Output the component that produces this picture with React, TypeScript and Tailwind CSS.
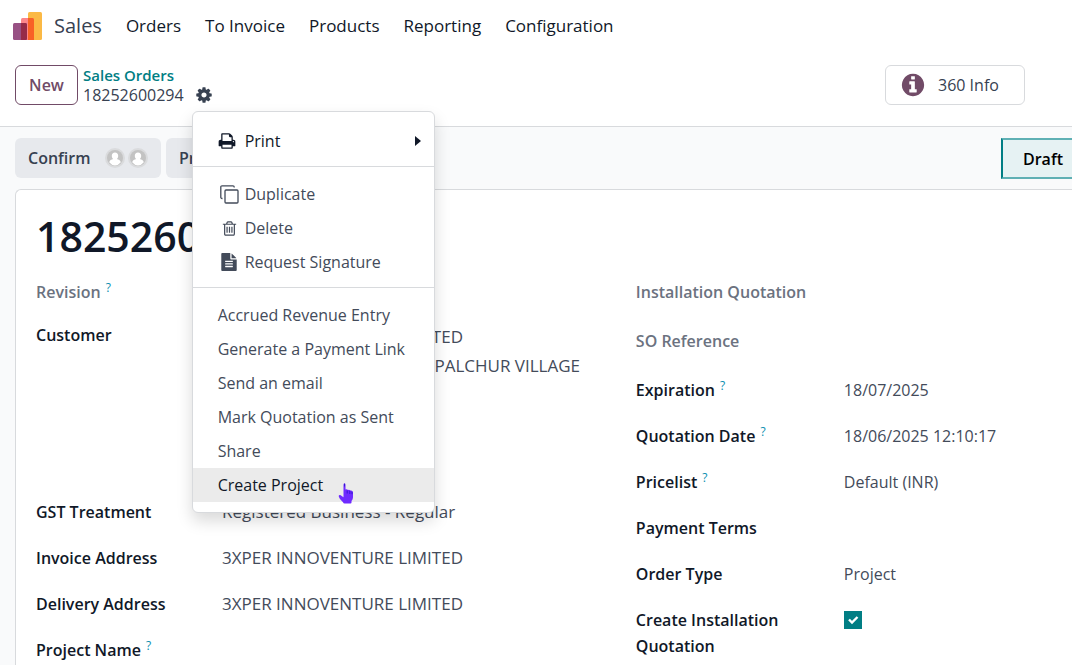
import type { ReactNode } from 'react';

type IconProps = { d: string; className?: string };

const Icon = ({ d, className }: IconProps) => (
  <svg viewBox="0 0 1792 1792" fill="currentColor" className={className} aria-hidden="true">
    <path d={d} />
  </svg>
);

const icons = {
  info: 'M1152 1376v-160q0-14-9-23t-23-9h-96v-512q0-14-9-23t-23-9h-320q-14 0-23 9t-9 23v160q0 14 9 23t23 9h96v320h-96q-14 0-23 9t-9 23v160q0 14 9 23t23 9h448q14 0 23-9t9-23zm-128-896v-160q0-14-9-23t-23-9h-192q-14 0-23 9t-9 23v160q0 14 9 23t23 9h192q14 0 23-9t9-23zm640 416q0 209-103 385.5t-279.5 279.5-385.5 103-385.5-103-279.5-279.5-103-385.5 103-385.5 279.5-279.5 385.5-103 385.5 103 279.5 279.5 103 385.5z',
  cog: 'M1152 896q0-106-75-181t-181-75-181 75-75 181 75 181 181 75 181-75 75-181zm512-109v222q0 12-8 23t-20 13l-185 28q-19 54-39 91 35 50 107 138 10 12 10 25t-9 23q-27 37-99 108t-94 71q-12 0-26-9l-138-108q-44 23-91 38-16 136-29 186-7 28-36 28h-222q-14 0-24.5-8.5t-11.5-21.5l-28-184q-49-16-90-37l-141 107q-10 9-25 9-14 0-25-11-126-114-165-168-7-10-7-23 0-12 8-23 15-21 51-66.5t54-70.5q-27-50-41-99l-183-27q-13-2-21-12.5t-8-23.5v-222q0-12 8-23t19-13l186-28q14-46 39-92-40-57-107-138-10-12-10-24 0-10 9-23 26-36 98.5-107.5t94.5-71.5q13 0 26 10l138 107q44-23 91-38 16-136 29-186 7-28 36-28h222q14 0 24.5 8.5t11.5 21.5l28 184q49 16 90 37l142-107q9-9 24-9 13 0 25 10 129 119 165 170 7 8 7 22 0 12-8 23-15 21-51 66.5t-54 70.5q26 50 41 98l183 28q13 2 21 12.5t8 23.5z',
  print: 'M448 1536h896v-256h-896v256zm0-640h896v-384h-160q-40 0-68-28t-28-68v-160h-640v640zm1152 64q0-26-19-45t-45-19-45 19-19 45 19 45 45 19 45-19 19-45zm128 0v416q0 13-9.5 22.5t-22.5 9.5h-224v160q0 40-28 68t-68 28h-960q-40 0-68-28t-28-68v-160h-224q-13 0-22.5-9.5t-9.5-22.5v-416q0-79 56.5-135.5t135.5-56.5h64v-544q0-40 28-68t68-28h672q40 0 88 20t76 48l152 152q28 28 48 76t20 88v256h64q79 0 135.5 56.5t56.5 135.5z',
  trash: 'M704 736v576q0 14-9 23t-23 9h-64q-14 0-23-9t-9-23v-576q0-14 9-23t23-9h64q14 0 23 9t9 23zm256 0v576q0 14-9 23t-23 9h-64q-14 0-23-9t-9-23v-576q0-14 9-23t23-9h64q14 0 23 9t9 23zm256 0v576q0 14-9 23t-23 9h-64q-14 0-23-9t-9-23v-576q0-14 9-23t23-9h64q14 0 23 9t9 23zm128 724v-948h-896v948q0 22 7 40.5t14.5 27 10.5 8.5h832q3 0 10.5-8.5t14.5-27 7-40.5zm-672-1076h448l-48-117q-7-9-17-11h-317q-10 2-17 11zm928 32v64q0 14-9 23t-23 9h-96v948q0 83-47 143.5t-113 60.5h-832q-66 0-113-58.5t-47-141.5v-952h-96q-14 0-23-9t-9-23v-64q0-14 9-23t23-9h309l70-167q15-37 54-63t79-26h320q40 0 79 26t54 63l70 167h309q14 0 23 9t9 23z',
  file: 'M1596 476q14 14 28 36h-472v-472q22 14 36 28zm-476 164h544v1056q0 40-28 68t-68 28h-1344q-40 0-68-28t-28-68v-1600q0-40 28-68t68-28h800v544q0 40 28 68t68 28zm160 736v-64q0-14-9-23t-23-9h-704q-14 0-23 9t-9 23v64q0 14 9 23t23 9h704q14 0 23-9t9-23zm0-256v-64q0-14-9-23t-23-9h-704q-14 0-23 9t-9 23v64q0 14 9 23t23 9h704q14 0 23-9t9-23zm0-256v-64q0-14-9-23t-23-9h-704q-14 0-23 9t-9 23v64q0 14 9 23t23 9h704q14 0 23-9t9-23z',
};

const SalesLogo = () => (
  <svg viewBox="0 0 29 29" className="w-[29px] h-[29px]" aria-hidden="true">
    <rect x="15" y="0" width="14" height="28" rx="1.5" fill="#FBB945" />
    <rect x="8" y="6" width="13" height="22" rx="1.5" fill="#FC868B" />
    <rect x="0" y="11" width="14" height="17" rx="1.5" fill="#985184" />
    <path d="M15 6h4.500q1.500 0 1.500 1.500V28h-6z" fill="#F86126" />
    <path d="M8 11h4.500q1.500 0 1.500 1.500v14q0 1.500-1.500 1.500H8z" fill="#962B48" />
  </svg>
);

const DuplicateIcon = () => (
  <svg viewBox="0 0 19 19" fill="none" stroke="currentColor" strokeWidth="1.3" className="w-[19px] h-[19px]" aria-hidden="true">
    <rect x="5" y="5" width="13" height="13" rx="1" />
    <path d="M2.500 13.500H2A1.200 1.200 0 0 1 .8 12.300V2A1.200 1.200 0 0 1 2 .8h11A1.200 1.200 0 0 1 14.200 2v.5" />
  </svg>
);

const Avatar = () => (
  <svg viewBox="0 0 20 20" className="w-5 h-5" aria-hidden="true">
    <circle cx="10" cy="10" r="10" fill="#dadbdd" />
    <circle cx="10" cy="10" r="8" fill="#c3c3c3" />
    <path d="M10 4.500c2 0 3.200 1.300 3.200 3.200 0 1.400-.6 2.600-1.400 3.300 1.800.5 3.600 1.300 4 3.300A8 8 0 0 1 10 17.500a8 8 0 0 1-5.800-3.200c.4-2 2.200-2.800 4-3.300-.8-.7-1.400-1.900-1.400-3.300 0-1.900 1.200-3.200 3.200-3.200z" fill="#fff" />
  </svg>
);

const HandCursor = () => (
  <svg viewBox="0 0 17 21" className="absolute left-[145px] top-[15px] w-[17px] h-[21px]" aria-hidden="true">
    <path
      d="M5.500 1.700Q5.500.5 6.500.5t1 1.200v4.800q1.500-.5 2.500.4 1.500-.4 2.500.6 1.500-.2 2 .8.500.5.500 1.500v4.500q0 2-1.500 3.700v1.500q0 1-1 1H6.500q-1 0-1.500-1.200-3.500-3-4.200-5.500-.3-1.500.7-1.800 1-.2 2.500 1.200l1.500 1z"
      fill="#6f2bff"
    />
    <path d="M9.200 7.500v3M11.800 8v3M14 8.700v2.500M6.500.5v3" stroke="#2a10c9" strokeWidth=".8" />
  </svg>
);

type MenuItemProps = { icon?: ReactNode; children: ReactNode; active?: boolean; submenu?: boolean; dark?: boolean };

const MenuItem = ({ icon, children, active, submenu, dark }: MenuItemProps) => (
  <button
    type="button"
    role="menuitem"
    className={`relative flex w-full h-[34px] items-center px-[25px] text-left ${active ? 'bg-[#ebebeb] text-gray-900' : dark ? 'text-gray-900' : 'text-[#434b5a]'}`}
  >
    {icon && <span className="flex w-[27px] shrink-0 items-center">{icon}</span>}
    <span className="grow whitespace-nowrap">{children}</span>
    {submenu && (
      <svg viewBox="0 0 6 10" className="-mr-3 h-[10px] w-[6px]" fill="currentColor" aria-hidden="true">
        <path d="M0 0l6 5-6 5z" />
      </svg>
    )}
    {active && <HandCursor />}
  </button>
);

const Separator = () => <hr className="mt-2 mb-[10px] border-t border-[#d8dadd]" />;

const ActionMenu = () => (
  <div
    role="menu"
    className="absolute left-[-3px] top-[25px] z-10 w-[243px] rounded-md border border-[#d8dadd] bg-white pt-3 pb-[10px] text-base shadow-[0_8px_16px_rgba(0,0,0,0.15)]"
  >
    <MenuItem dark submenu icon={<Icon d={icons.print} className="h-[18px] w-[18px]" />}>Print</MenuItem>
    <Separator />
    <MenuItem icon={<span className="ml-[2px]"><DuplicateIcon /></span>}>Duplicate</MenuItem>
    <MenuItem icon={<Icon d={icons.trash} className="ml-[3px] h-[17px] w-[17px]" />}>Delete</MenuItem>
    <MenuItem icon={<Icon d={icons.file} className="ml-[2px] h-[18px] w-[18px]" />}>Request Signature</MenuItem>
    <Separator />
    <MenuItem>Accrued Revenue Entry</MenuItem>
    <MenuItem>Generate a Payment Link</MenuItem>
    <MenuItem>Send an email</MenuItem>
    <MenuItem>Mark Quotation as Sent</MenuItem>
    <MenuItem>Share</MenuItem>
    <MenuItem active>Create Project</MenuItem>
  </div>
);

const Help = () => <span className="ml-[5px] align-super text-xs leading-none font-medium text-[#0b8fb0]">?</span>;

type FieldProps = { label: string; help?: boolean; muted?: boolean; className?: string; children?: ReactNode };

const LeftField = ({ label, help, muted, className = '', children }: FieldProps) => (
  <div className={`flex ${className}`}>
    <dt className={`h-[26px] w-[186px] shrink-0 font-semibold ${muted ? 'text-[#6b7280]' : 'text-gray-900'}`}>
      {label}
      {help && <Help />}
    </dt>
    <dd className="grow text-[17px] whitespace-nowrap text-[#434b5a]">{children}</dd>
  </div>
);

const RightField = ({ label, help, muted, className = '', children }: FieldProps) => (
  <div className={`flex ${className}`}>
    <dt className={`h-[26px] w-[208px] shrink-0 font-semibold ${muted ? 'text-[#6b7280]' : 'text-gray-900'}`}>
      {label}
      {help && <Help />}
    </dt>
    <dd className="grow whitespace-nowrap text-[#434b5a]">{children}</dd>
  </div>
);

const App = () => {
  return (
    <div className="flex min-h-screen flex-col overflow-hidden bg-white font-['Open_Sans','Noto_Sans',sans-serif] text-base leading-[26px] text-[#374151]">
      {/* Navbar */}
      <header className="flex h-[52px] items-center pl-[13px]">
        <SalesLogo />
        <a href="#sales" className="ml-3 text-xl text-[#374151]">Sales</a>
        <nav className="ml-6 flex gap-6 text-[17px] whitespace-nowrap text-gray-900">
          <a href="#orders">Orders</a>
          <a href="#to-invoice">To Invoice</a>
          <a href="#products">Products</a>
          <a href="#reporting">Reporting</a>
          <a href="#configuration">Configuration</a>
        </nav>
      </header>

      {/* Control panel */}
      <div className="flex h-[75px] items-start border-b border-[#d8dadd] pt-[13px] pr-[47px] pl-[15px]">
        <button type="button" className="h-10 w-[63px] rounded-md border border-[#714b67] font-semibold text-[#714b67]">
          New
        </button>
        <div className="ml-[5px] leading-5">
          <a href="#sales-orders" className="block text-[15px] font-semibold text-[#017e84]">Sales Orders</a>
          <div className="flex items-center">
            <span>18252600294</span>
            <div className="relative ml-[11px] flex">
              <button type="button" aria-label="Actions" aria-haspopup="menu" className="text-[#374151]">
                <Icon d={icons.cog} className="h-[18px] w-[18px]" />
              </button>
              <ActionMenu />
            </div>
          </div>
        </div>
        <button type="button" className="ml-auto flex h-10 w-[140px] items-center rounded-md border border-[#d8dadd] pl-[14px]">
          <Icon d={icons.info} className="h-[26px] w-[26px] text-[#714b67]" />
          <span className="ml-3">360 Info</span>
        </button>
      </div>

      <main className="flex grow flex-col bg-[#f9fafb] pl-[15px]">
        {/* Status bar */}
        <div className="flex items-start gap-[5px] pt-[11px] pb-[10px]">
          <button type="button" className="flex h-10 w-[146px] items-center rounded-md bg-[#e7e9ed] pl-[13px] font-semibold text-[#374151]">
            Confirm
            <span className="ml-[14px] flex gap-[3px]">
              <Avatar />
              <Avatar />
            </span>
          </button>
          <button type="button" className="h-10 rounded-md bg-[#e7e9ed] px-[13px] font-semibold text-[#374151]">
            Pr
          </button>
          <button type="button" className="ml-auto h-[41px] border-2 border-r-0 border-y-[#5fb0b4] border-l-[#017e84] bg-[#e6f2f3] pr-[9px] pl-5 font-semibold text-black">
            Draft
          </button>
        </div>

        {/* Form sheet */}
        <section className="grow rounded-tl-md border-t border-l border-[#d8dadd] bg-white pt-[22px] pl-5">
          <h1 className="mb-[19px] text-[41px] leading-[48px] font-semibold text-gray-900">18252600294</h1>
          <div className="grid grid-cols-[579fr_421fr]">
            <dl className="flex flex-col gap-5">
              <LeftField label="Revision" help muted className="-mb-[3px]" />
              <LeftField label="Customer" className="min-h-[157px]">
                <p className="leading-[29px]">3XPER INNOVENTURE LIMITED</p>
                <p className="w-[358px] text-right leading-[29px]">PALCHUR VILLAGE</p>
              </LeftField>
              <LeftField label="GST Treatment">Registered Business - Regular</LeftField>
              <LeftField label="Invoice Address">3XPER INNOVENTURE LIMITED</LeftField>
              <LeftField label="Delivery Address">3XPER INNOVENTURE LIMITED</LeftField>
              <LeftField label="Project Name" help />
            </dl>
            <dl className="flex flex-col gap-5">
              <RightField label="Installation Quotation" muted className="mb-[3px] whitespace-nowrap" />
              <RightField label="SO Reference" muted className="mb-[3px]" />
              <RightField label="Expiration" help>18/07/2025</RightField>
              <RightField label="Quotation Date" help>18/06/2025 12:10:17</RightField>
              <RightField label="Pricelist" help>Default (INR)</RightField>
              <RightField label="Payment Terms" />
              <RightField label="Order Type">Project</RightField>
              <div className="flex">
                <dt className="w-[208px] shrink-0 pr-10 font-semibold text-gray-900">
                  <label htmlFor="create-installation">Create Installation Quotation</label>
                </dt>
                <dd className="grid h-[26px] w-[18px] items-center">
                  <input
                    id="create-installation"
                    type="checkbox"
                    defaultChecked
                    className="col-start-1 row-start-1 h-[18px] w-[18px] appearance-none bg-[#017e84]"
                  />
                  <svg viewBox="0 0 18 18" className="pointer-events-none col-start-1 row-start-1 h-[18px] w-[18px]" fill="none" stroke="#fff" strokeWidth="2.4" aria-hidden="true">
                    <path d="M5 8.500l3 3 5.500-5.500" />
                  </svg>
                </dd>
              </div>
            </dl>
          </div>
        </section>
      </main>
    </div>
  );
};

export default App;
